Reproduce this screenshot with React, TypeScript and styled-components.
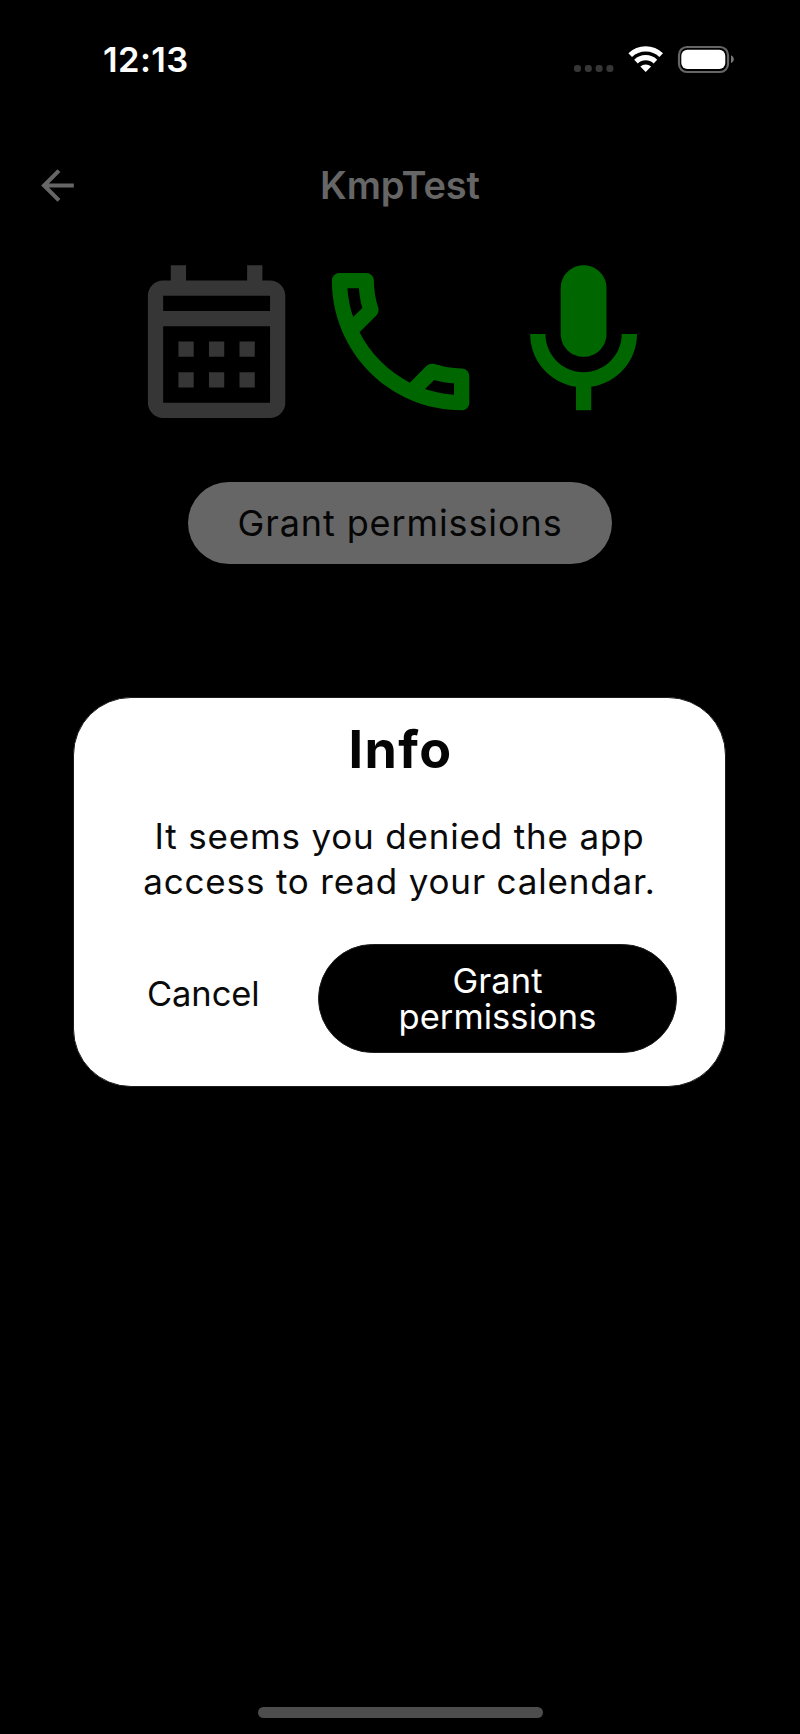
import React from "react";
import styled, { createGlobalStyle } from "styled-components";

const GlobalStyle = createGlobalStyle`
  *, *::before, *::after { box-sizing: border-box; }
  body { margin: 0; background: #000; font-family: Inter, "Liberation Sans", sans-serif; }
  button { font: inherit; border: 0; padding: 0; cursor: pointer; }
`;

const Screen = styled.div`
  position: relative;
  display: flex;
  flex-direction: column;
  width: 800px;
  height: 1734px;
  background: #000;
  overflow: hidden;
`;

const StatusBar = styled.header`
  display: flex;
  align-items: center;
  justify-content: space-between;
  height: 120px;
  padding: 0 66px 0 103px;
`;

const Clock = styled.time`
  color: #fff;
  font-size: 34.5px;
  font-weight: 600;
  line-height: 40px;
  letter-spacing: 0.4px;
`;

const StatusIcons = styled.svg`
  display: block;
  width: 164px;
  height: 32px;
`;

const TopBar = styled.nav`
  display: grid;
  grid-template-columns: 49px 1fr 49px;
  align-items: center;
  height: 130px;
  padding: 0 32.5px;
`;

const BackButton = styled.button`
  display: block;
  width: 49px;
  height: 49px;
  background: none;
  color: #666;
`;

const Title = styled.h1`
  margin: 0;
  color: #666;
  font-size: 38px;
  font-weight: 600;
  line-height: 48px;
  text-align: center;
  letter-spacing: -0.1px;
`;

const Permissions = styled.section`
  display: flex;
  justify-content: center;
  padding-left: 0.5px;
`;

const PermissionIcon = styled.svg<{ $granted?: boolean }>`
  display: block;
  width: 183.2px;
  height: 183.2px;
  fill: ${(p) => (p.$granted ? "#006600" : "#363636")};
`;

const GrantButton = styled.button`
  align-self: center;
  width: 424px;
  height: 82px;
  margin-top: 49px;
  border-radius: 41px;
  background: #666;
  color: #050505;
  font-size: 36px;
  font-weight: 400;
  letter-spacing: 0.9px;
`;

const HomeIndicator = styled.div`
  align-self: center;
  width: 285px;
  height: 11px;
  margin-top: auto;
  margin-bottom: 16px;
  border-radius: 6px;
  background: #4d4d4d;
`;

const Overlay = styled.div`
  position: absolute;
  inset: 0;
  display: flex;
  justify-content: center;
  align-items: flex-start;
  padding-top: 697px;
`;

const Dialog = styled.section`
  display: flex;
  flex-direction: column;
  width: 653px;
  height: 390px;
  margin-right: 1px;
  padding: 21px 48px 33px;
  border: 1px solid #1c1c1c;
  border-radius: 58px;
  background: #fff;
`;

const DialogTitle = styled.h2`
  margin: 0;
  padding-left: 2px;
  color: #050505;
  font-size: 52px;
  font-weight: 700;
  line-height: 62px;
  text-align: center;
  letter-spacing: 1.4px;
`;

const DialogText = styled.p`
  margin: 33px 0 0;
  color: #0a0a0a;
  font-size: 35px;
  font-weight: 400;
  line-height: 45.4px;
  text-align: center;
  white-space: nowrap;
  letter-spacing: 0.83px;
`;

const Actions = styled.div`
  display: flex;
  justify-content: space-between;
  align-items: flex-start;
  margin-top: auto;
  padding-left: 25px;
`;

const CancelButton = styled.button`
  height: 99px;
  background: none;
  color: #0a0a0a;
  font-size: 34.5px;
  font-weight: 400;
  letter-spacing: -0.1px;
`;

const ConfirmButton = styled.button`
  width: 359px;
  height: 109px;
  padding: 0 70px;
  border: 1px solid #1c1c1c;
  border-radius: 55px;
  background: #000;
  color: #fff;
  font-size: 34.5px;
  font-weight: 400;
  line-height: 36px;
  letter-spacing: 0.05px;
`;

export default function App() {
  return (
    <>
      <GlobalStyle />
      <Screen>
        <StatusBar>
          <Clock>12:13</Clock>
          <StatusIcons viewBox="570 44 164 32" aria-label="Wi-Fi and battery">
            <g fill="#363636">
              {[574, 584.8, 595.6, 606.4].map((x) => (
                <rect key={x} x={x} y="65" width="7" height="7" rx="3" />
              ))}
            </g>
            <g fill="none" stroke="#fff" strokeWidth="5.2">
              <path d="M630.2 55.2a22.3 22.3 0 0 1 31 0" />
              <path d="M636 61.6a14 14 0 0 1 19.4 0" />
            </g>
            <path d="M640.3 66.6a8.2 8.2 0 0 1 10.8 0l-5.4 5.5z" fill="#fff" />
            <rect x="679" y="47" width="49" height="25" rx="8" fill="none" stroke="#666" strokeWidth="2.2" />
            <rect x="681.3" y="49.7" width="44" height="19.3" rx="6" fill="#fff" />
            <path d="M731 55.3c1.7.7 2.8 2.1 2.8 3.9s-1.1 3.2-2.8 3.9z" fill="#777" />
          </StatusIcons>
        </StatusBar>
        <TopBar>
          <BackButton aria-label="Back">
            <svg viewBox="0 0 24 24" width="49" height="49" fill="currentColor">
              <path d="M20 11H7.83l5.59-5.59L12 4l-8 8 8 8 1.41-1.41L7.83 13H20v-2z" />
            </svg>
          </BackButton>
          <Title>KmpTest</Title>
        </TopBar>
        <Permissions>
          <PermissionIcon viewBox="0 0 24 24">
            <path d="M19 4h-1V2h-2v2H8V2H6v2H5c-1.1 0-2 .9-2 2v14c0 1.1.9 2 2 2h14c1.1 0 2-.9 2-2V6c0-1.1-.9-2-2-2zm0 16H5V10h14v10zm0-12H5V6h14v2zM9 14H7v-2h2v2zm4 0h-2v-2h2v2zm4 0h-2v-2h2v2zm-8 4H7v-2h2v2zm4 0h-2v-2h2v2zm4 0h-2v-2h2v2z" />
          </PermissionIcon>
          <PermissionIcon viewBox="0 0 24 24" $granted>
            <path d="M6.54 5c.06.89.21 1.76.45 2.59l-1.2 1.2c-.41-1.2-.67-2.47-.76-3.79h1.51m9.86 12.02c.85.24 1.72.39 2.6.45v1.49c-1.32-.09-2.59-.35-3.8-.75l1.2-1.19M7.5 3H4c-.55 0-1 .45-1 1 0 9.39 7.61 17 17 17 .55 0 1-.45 1-1v-3.49c0-.55-.45-1-1-1-1.24 0-2.45-.2-3.57-.57-.1-.04-.21-.05-.31-.05-.26 0-.51.1-.71.29l-2.2 2.2c-2.83-1.45-5.15-3.76-6.59-6.59l2.2-2.2c.28-.28.36-.67.25-1.02C8.7 6.45 8.5 5.25 8.5 4c0-.55-.45-1-1-1z" />
          </PermissionIcon>
          <PermissionIcon viewBox="0 0 24 24" $granted>
            <path d="M12 14c1.66 0 3-1.34 3-3V5c0-1.66-1.34-3-3-3S9 3.34 9 5v6c0 1.66 1.34 3 3 3z" />
            <path d="M17 11c0 2.76-2.24 5-5 5s-5-2.24-5-5H5c0 3.53 2.61 6.43 6 6.92V21h2v-3.08c3.39-.49 6-3.39 6-6.92h-2z" />
          </PermissionIcon>
        </Permissions>
        <GrantButton>Grant permissions</GrantButton>
        <HomeIndicator />
        <Overlay>
          <Dialog role="dialog" aria-modal="true">
            <DialogTitle>Info</DialogTitle>
            <DialogText>
              It seems you denied the app
              <br />
              access to read your calendar.
            </DialogText>
            <Actions>
              <CancelButton>Cancel</CancelButton>
              <ConfirmButton>Grant permissions</ConfirmButton>
            </Actions>
          </Dialog>
        </Overlay>
      </Screen>
    </>
  );
}
